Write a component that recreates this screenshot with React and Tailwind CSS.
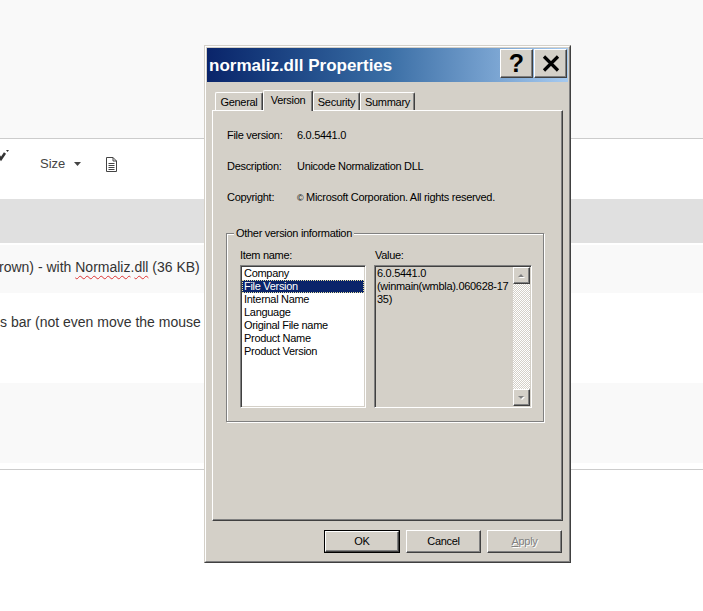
import React from "react";

// classic win2k bevels
const raised =
  "border border-t-white border-l-white border-r-[#404040] border-b-[#404040] shadow-[inset_-1px_-1px_0_#808080]";
const sunken =
  "border border-t-[#808080] border-l-[#808080] border-r-white border-b-white shadow-[inset_1px_1px_0_#404040,inset_-1px_-1px_0_#d4d0c8]";

const items = [
  "Company",
  "File Version",
  "Internal Name",
  "Language",
  "Original File name",
  "Product Name",
  "Product Version",
];

function Arrow({ up }) {
  return (
    <svg width="9" height="6" viewBox="0 0 9 6">
      <path d={up ? "M5 2 L8 5 L2 5 Z" : "M5 5 L8 2 L2 2 Z"} fill="#fff" />
      <path d={up ? "M4 1 L7 4 L1 4 Z" : "M4 4 L7 1 L1 1 Z"} fill="#808080" />
    </svg>
  );
}

function Tab({ label, active, w }) {
  return (
    <div
      className={`flex items-center justify-center ${w} rounded-t-[2px] border-l border-t border-r border-l-white border-t-white border-r-[#404040] shadow-[inset_-1px_0_0_#808080] ${
        active ? "relative z-10 h-[21px] -mb-px bg-[#d4d0c8] pb-[2px]" : "h-[18px] pt-[1px]"
      }`}
    >
      {label}
    </div>
  );
}

function Dialog() {
  return (
    <div className="absolute left-[204px] top-[45px] w-[367px] h-[518px] border border-t-[#d4d0c8] border-l-[#d4d0c8] border-r-[#404040] border-b-[#404040] bg-[#d4d0c8] font-['Liberation_Sans',Arial,sans-serif] text-[11px] leading-[13px] tracking-[-0.3px] text-black">
      <div className="h-full border border-t-white border-l-white border-r-[#808080] border-b-[#808080] p-px flex flex-col">
        {/* title bar */}
        <div className="h-[34px] flex items-center justify-between bg-linear-to-r from-[#0a246a] via-[#3a6ea5] to-[#a6caf0] pl-[2px] pr-[1px]">
          <span className="text-white font-bold text-[17px] tracking-normal leading-none">
            normaliz.dll Properties
          </span>
          <div className="flex gap-px -mt-[3px]">
            <div className={`w-[33px] h-[29px] bg-[#d4d0c8] flex items-center justify-center ${raised}`}>
              <span className="font-bold text-[25px] leading-none tracking-normal">?</span>
            </div>
            <div className={`w-[33px] h-[29px] bg-[#d4d0c8] flex items-center justify-center ${raised}`}>
              <svg width="18" height="17" viewBox="0 0 18 17">
                <path d="M2 1.5 L16 15.5 M16 1.5 L2 15.5" stroke="#000" strokeWidth="3.2" />
              </svg>
            </div>
          </div>
        </div>

        {/* tabs */}
        <div className="mt-[8px] h-[20px] flex items-end pl-[8px]">
          <Tab label="General" w="w-[48px]" />
          <Tab label="Version" w="w-[50px]" active />
          <Tab label="Security" w="w-[47px]" />
          <Tab label="Summary" w="w-[55px]" />
        </div>

        {/* panel */}
        <div className="mx-[5px] h-[411px] border border-t-white border-l-white border-r-[#404040] border-b-[#404040] shadow-[inset_-1px_-1px_0_#808080] pt-[18px]">
          <div className="pl-[14px]">
            <div className="flex h-[13px]">
              <span className="w-[70px]">File version:</span>
              <span>6.0.5441.0</span>
            </div>
            <div className="flex h-[13px] mt-[18px]">
              <span className="w-[70px]">Description:</span>
              <span>Unicode Normalization DLL</span>
            </div>
            <div className="flex h-[13px] mt-[18px]">
              <span className="w-[70px]">Copyright:</span>
              <span>
                <span className="text-[9px]">©</span> Microsoft Corporation. All rights reserved.
              </span>
            </div>
          </div>

          {/* group box */}
          <div className="relative ml-[13px] mt-[29px] w-[318px] h-[189px] border border-[#808080] shadow-[inset_1px_1px_0_white,1px_1px_0_white] pt-[15px] pl-[13px]">
            <span className="absolute left-[7px] -top-[7px] bg-[#d4d0c8] px-[2px]">
              Other version information
            </span>
            <div className="flex gap-[8px]">
              <div className="w-[126px]">
                <div className="h-[13px]">Item name:</div>
                <div className={`mt-[3px] h-[143px] bg-white p-px ${sunken}`}>
                  {items.map((it) => (
                    <div
                      key={it}
                      className={`h-[13px] pl-[2px] whitespace-nowrap ${
                        it === "File Version"
                          ? "bg-[#0a246a] text-white outline-1 outline-dotted outline-[#e8e0a0] -outline-offset-1"
                          : ""
                      }`}
                    >
                      {it}
                    </div>
                  ))}
                </div>
              </div>
              <div className="w-[158px]">
                <div className="h-[13px] pl-px">Value:</div>
                <div className={`mt-[3px] h-[143px] p-px flex ${sunken}`}>
                  <div className="flex-1 pl-px whitespace-nowrap">
                    <div>6.0.5441.0</div>
                    <div>(winmain(wmbla).060628-17</div>
                    <div>35)</div>
                  </div>
                  <div className="w-[17px] flex flex-col">
                    <div className={`h-[17px] bg-[#d4d0c8] flex items-center justify-center ${raised}`}>
                      <Arrow up />
                    </div>
                    <div className="flex-1 bg-[image:repeating-conic-gradient(#fff_0_25%,#d4d0c8_0_50%)] bg-[length:2px_2px]" />
                    <div className={`h-[17px] bg-[#d4d0c8] flex items-center justify-center ${raised}`}>
                      <Arrow />
                    </div>
                  </div>
                </div>
              </div>
            </div>
          </div>
        </div>

        {/* buttons */}
        <div className="mt-[9px] flex justify-end gap-[6px] pr-[6px]">
          <div className="w-[76px] h-[23px] border border-black">
            <div className={`h-full flex items-center justify-center ${raised}`}>OK</div>
          </div>
          <div className={`w-[75px] h-[23px] flex items-center justify-center ${raised}`}>Cancel</div>
          <div className={`w-[75px] h-[23px] flex items-center justify-center text-[#808080] [text-shadow:1px_1px_0_#fff] ${raised}`}>
            <span>
              <span className="underline underline-offset-1">A</span>pply
            </span>
          </div>
        </div>
      </div>
    </div>
  );
}

export default function App() {
  return (
    <div className="relative w-[703px] h-[611px] overflow-hidden bg-white font-['Liberation_Sans',Arial,sans-serif] text-[#333]">
      <div className="h-[139px] bg-[#f9f9f9] border-b border-[#cccccc]" />

      {/* toolbar */}
      <div className="h-[60px]">
        <div className="h-[50px] flex items-center relative">
          <svg width="12" height="14" viewBox="0 0 12 14" className="absolute -left-[3px] top-[11px]">
            <path d="M0 3 L4 9 L8 3" fill="none" stroke="#333" strokeWidth="2.5" />
            <path d="M9 0 L12 0 L10.5 2 Z" fill="#333" />
          </svg>
          <span className="ml-[40px] text-[13px] text-[#444]">Size</span>
          <svg width="8" height="5" viewBox="0 0 8 5" className="ml-[9px]">
            <path d="M0 0 L7 0 L3.5 4 Z" fill="#444" />
          </svg>
          <svg width="13" height="15" viewBox="0 0 13 15" className="ml-[23px]">
            <path d="M1.5 0.5 H8 L11.5 4 V14.5 H1.5 Z" fill="none" stroke="#444" />
            <path d="M8 0.5 V4 H11.5" fill="none" stroke="#444" />
            <path d="M3.5 6.5 H9.5 M3.5 8.5 H9.5 M3.5 10.5 H9.5 M3.5 12.5 H9.5" stroke="#444" />
          </svg>
        </div>
      </div>

      <div className="h-[44px] bg-[#e0e0e0]" />
      <div className="h-[2px]" />

      <div className="h-[48px] bg-[#f9f9f9] flex items-center pb-[2px] text-[14px] whitespace-nowrap">
        <div className="-ml-[1px] w-[206px] h-[26px] leading-[24px] overflow-hidden">
          rown) - with{" "}
          <span className="underline decoration-wavy decoration-[#d33] decoration-1 underline-offset-[3px]">Normaliz</span>.
          <span className="underline decoration-wavy decoration-[#d33] decoration-1 underline-offset-[3px]">dll</span> (36 KB) n
        </div>
      </div>

      <div className="h-[90px] pt-[19px] text-[14px] whitespace-nowrap">
        <div className="w-[205px] overflow-hidden">s bar (not even move the mouse</div>
      </div>

      <div className="h-[80px] bg-[#f9f9f9]" />
      <div className="h-[7px] border-b border-[#cccccc]" />

      <Dialog />
    </div>
  );
}
